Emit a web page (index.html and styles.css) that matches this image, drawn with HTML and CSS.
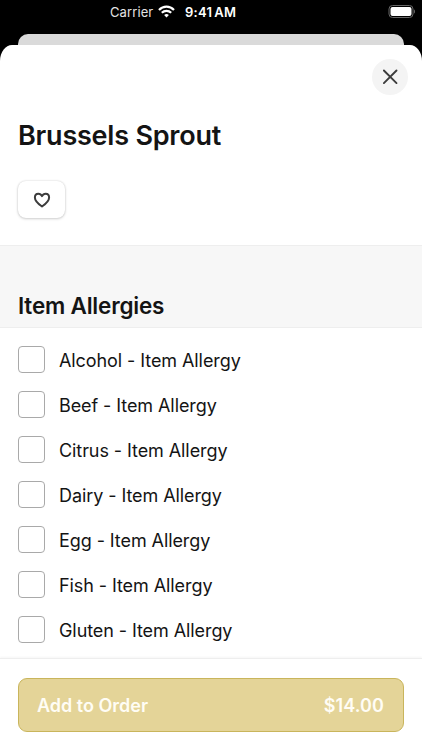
FILE: index.html
```html
<!DOCTYPE html>
<html lang="en">
<head>
<meta charset="utf-8">
<title>Brussels Sprout</title>
<link rel="stylesheet" href="styles.css">
</head>
<body>
<header class="status">
  <span class="carrier">Carrier</span>
  <svg class="wifi" width="17" height="13" viewBox="0 0 17 13" fill="none" stroke="#fff" stroke-width="2.2">
    <path d="M1 4.9C5.2.6 11.8.6 16 4.9"/>
    <path d="M3.8 7.8c2.6-2.6 6.800-2.600 9.400 0"/>
    <path d="M8.500 12.500 6.100 10.100a3.400 3.400 0 0 1 4.800 0Z" fill="#fff" stroke="none"/>
  </svg>
  <span class="time">9:41<span class="meridiem">AM</span></span>
  <svg class="battery" width="27" height="13" viewBox="0 0 27 13">
    <rect x="1" y=".5" width="24" height="12" rx="3.500" fill="none" stroke="#666"/>
    <rect x="2.500" y="2" width="21" height="9" rx="2" fill="#fff"/>
    <path d="M26 4.500c1.300.5 1.300 3.500 0 4Z" fill="#666"/>
  </svg>
</header>
<div class="backdrop"></div>
<main class="sheet">
  <section class="intro">
    <button class="close" aria-label="Close">
      <svg width="16" height="16" viewBox="0 0 16 16" fill="none" stroke="#3c3c3c" stroke-width="1.900" stroke-linecap="round"><path d="m1.900 1.500 12.600 12.600M14.500 1.500 1.900 14.100"/></svg>
    </button>
    <h1>Brussels Sprout</h1>
    <button class="favorite" aria-label="Favorite">
      <svg width="18" height="16" viewBox="0 0 18 16" fill="none" stroke="#3c3c3c" stroke-width="2" stroke-linejoin="round"><path d="M9 14.500C5.500 12.200 1.900 9.100 1.900 5.600 1.900 3.200 3.400 1.800 5.300 1.800 7 1.800 8.300 2.700 9 4.200 9.700 2.700 11 1.800 12.700 1.800c1.900 0 3.400 1.400 3.400 3.800 0 3.500-3.600 6.600-7.100 8.900Z"/></svg>
    </button>
  </section>
  <h2>Item Allergies</h2>
  <div class="options">
    <label class="option"><span class="box"></span><span class="name">Alcohol - Item Allergy</span></label>
    <label class="option"><span class="box"></span><span class="name">Beef - Item Allergy</span></label>
    <label class="option"><span class="box"></span><span class="name">Citrus - Item Allergy</span></label>
    <label class="option"><span class="box"></span><span class="name">Dairy - Item Allergy</span></label>
    <label class="option"><span class="box"></span><span class="name">Egg - Item Allergy</span></label>
    <label class="option"><span class="box"></span><span class="name">Fish - Item Allergy</span></label>
    <label class="option"><span class="box"></span><span class="name">Gluten - Item Allergy</span></label>
  </div>
  <footer class="bar">
    <button class="add"><span class="add-label">Add to Order</span><span class="price">$14.00</span></button>
  </footer>
</main>
</body>
</html>
```
FILE: styles.css
```css
* { box-sizing: border-box; }
body {
  margin: 0;
  height: 750px;
  display: flex;
  flex-direction: column;
  overflow: hidden;
  background: #000;
  color: #141414;
  font-family: Inter, "Liberation Sans", sans-serif;
}
button { font: inherit; padding: 0; border: 0; }
svg { display: block; flex: none; }
.status {
  height: 34px;
  flex: none;
  display: flex;
  align-items: flex-start;
  padding: 5px 7px 0 110px;
  color: #fff;
  font-size: 13px;
  line-height: 14px;
  white-space: nowrap;
}
.carrier { width: 48px; color: #e4e4e4; letter-spacing: .1px; }
.time { margin-left: 10px; font-weight: 600; letter-spacing: .25px; }
.meridiem { margin-left: 2px; }
.battery { margin-left: auto; }
.backdrop {
  height: 11px;
  flex: none;
  margin: 0 18px;
  border-radius: 10px 10px 0 0;
  background: #dadada;
}
.sheet {
  flex: 1;
  min-height: 0;
  display: flex;
  flex-direction: column;
  overflow: hidden;
  background: #fff;
  border-radius: 12px 12px 0 0 / 16px 16px 0 0;
}
.intro {
  height: 200px;
  flex: none;
  display: flex;
  flex-direction: column;
  align-items: flex-start;
  padding: 14px 14px 0 18px;
}
.close {
  width: 36px;
  height: 36px;
  align-self: flex-end;
  display: grid;
  place-items: center;
  border-radius: 50%;
  background: #f4f4f4;
}
h1, h2 { margin: 0; font-weight: 600; white-space: nowrap; }
h1 { margin-top: 24px; font-size: 27px; line-height: 34px; letter-spacing: -.22px; }
.favorite {
  width: 47px;
  height: 37px;
  margin-top: 28px;
  display: grid;
  place-items: center;
  border-radius: 8px;
  background: #fff;
  box-shadow: 0 0 2px rgba(0,0,0,.16), 0 1px 3px rgba(0,0,0,.16);
}
h2 {
  height: 83px;
  flex: none;
  padding: 46px 18px 0;
  border: solid #eee;
  border-width: 1px 0;
  background: #f7f7f7;
  font-size: 22.5px;
  line-height: 28px;
  letter-spacing: -.2px;
}
.options { height: 330px; flex: none; padding-top: 9px; }
.option {
  height: 45px;
  display: flex;
  align-items: center;
  gap: 14px;
  padding-left: 18px;
  font-size: 18px;
  letter-spacing: -.08px;
  white-space: nowrap;
}
.name { padding-top: 2px; }
.box {
  width: 27px;
  height: 27px;
  border: 1px solid #a9a9a9;
  border-radius: 4px;
}
.bar {
  flex: 1;
  padding: 19px 18px 0;
  border-top: 1px solid #eee;
  background: #fff;
  box-shadow: 0 -1px 2px rgba(0,0,0,.04);
}
.add {
  width: 100%;
  height: 54px;
  display: flex;
  align-items: center;
  justify-content: space-between;
  padding: 0 19px 0 18px;
  border: 1px solid #c9b55c;
  border-radius: 9px;
  background: #e4d498;
  color: #fffdf5;
  font-size: 18px;
  font-weight: 600;
}
.price { letter-spacing: .1px; }
```
